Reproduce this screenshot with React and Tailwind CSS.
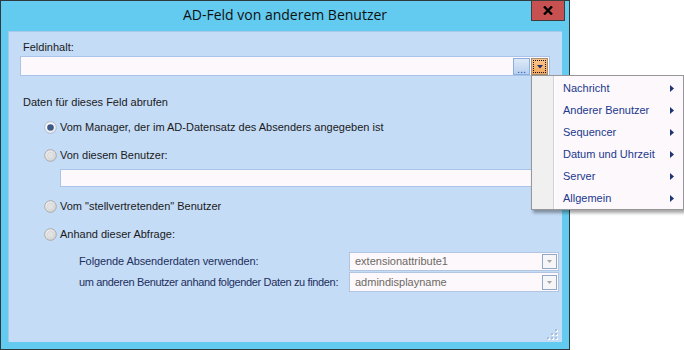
function Radio({ checked }) {
  return (
    <svg width="13" height="13" viewBox="0 0 13 13" className="shrink-0">
      <defs>
        <linearGradient id={checked ? "rg1" : "rg0"} x1="0" y1="0" x2="1" y2="1">
          <stop offset="0" stopColor={checked ? "#ffffff" : "#f4f4f4"} />
          <stop offset="1" stopColor={checked ? "#e6ebf2" : "#cfcfcf"} />
        </linearGradient>
      </defs>
      <circle cx="6.5" cy="6.5" r="5.8" fill={`url(#${checked ? "rg1" : "rg0"})`} stroke={checked ? "#aeb9c9" : "#a9a9a9"} strokeWidth="1" />
      {checked ? (
        <circle cx="6.5" cy="6.5" r="3.3" fill="#3f5a86" />
      ) : (
        <circle cx="6.5" cy="6.5" r="3.3" fill="#e2e2e2" stroke="#d4d4d4" strokeWidth="0.6" />
      )}
    </svg>
  );
}

function RadioRow({ checked, label, mt }) {
  return (
    <div className={`ml-[35px] h-[16px] flex items-center gap-[3px] ${mt}`}>
      <Radio checked={checked} />
      <span className="leading-[13px] text-[#1a1a1a] whitespace-nowrap">{label}</span>
    </div>
  );
}

function Combo({ value, h }) {
  return (
    <div className={`w-[210px] shrink-0 ${h} border border-[#b1c5e0] bg-[#fcf8fc] flex items-center justify-between pl-[5px] pr-[1px]`}>
      <span className="text-[#6e6862] leading-[13px]">{value}</span>
      <div className="w-[15px] h-[15px] border border-[#92a8c4] bg-[#f6f6f8] flex items-center justify-center">
        <svg width="5" height="3" viewBox="0 0 5 3">
          <path d="M0 0H5L2.5 3Z" fill="#a7a7a7" />
        </svg>
      </div>
    </div>
  );
}

const menuItems = ["Nachricht", "Anderer Benutzer", "Sequencer", "Datum und Uhrzeit", "Server", "Allgemein"];

export default function App() {
  return (
    <div className="relative w-[684px] h-[350px] bg-white overflow-hidden font-['Liberation_Sans',Arial,sans-serif] text-[11px]">
      <div className="w-[570px] h-[350px] border border-[#2f3a40] bg-[#63cbef] flex flex-col">
        <div className="h-[30px] shrink-0 grid grid-cols-[1fr_auto_1fr]">
          <div />
          <div className="font-['Open_Sans',sans-serif] text-[14px] leading-[28px] text-[#111]">
            AD-Feld von anderem Benutzer
          </div>
          <div className="flex justify-end items-start pr-[4px]">
            <div className="-mt-[1px] w-[34px] h-[21px] bg-[#c75050] border border-[#3d3d3d] flex items-center justify-center">
              <svg width="10" height="9" viewBox="0 0 10 9">
                <path d="M1 0.5L9 8.5M9 0.5L1 8.5" stroke="#000" strokeWidth="2.4" />
              </svg>
            </div>
          </div>
        </div>
        <div className="mx-[7px] h-[311px] bg-[#c5dcf7] border-t border-l border-[#a9c8ea] flex flex-col">
          <div className="ml-[14px] mt-[9px] leading-[13px] text-[#1a1a1a]">Feldinhalt:</div>
          <div className="ml-[11px] mt-[2px] w-[530px] h-[20px] border border-[#a9c4e8] bg-[#fdf8fc] flex justify-end items-start pt-[1px] pr-[1px] gap-[1px]">
            <div className="w-[17px] h-[17px] border border-[#8aaedd] bg-gradient-to-b from-[#dde9f8] to-[#b8d0f0] flex items-end justify-center">
              <span className="text-[#2850b0] leading-[10px] text-[11px]">...</span>
            </div>
            <div className="w-[17px] h-[17px] border border-[#a38d6c] bg-gradient-to-b from-[#fcc58a] to-[#f4a95e] p-[1px]">
              <div className="w-full h-full border border-dotted border-[#111] flex items-center justify-center">
                <svg width="6" height="4" viewBox="0 0 6 4">
                  <path d="M0 0H6L3 3.5Z" fill="#1b2f6a" />
                </svg>
              </div>
            </div>
          </div>
          <div className="ml-[14px] mt-[20px] leading-[13px] text-[#1a1a1a]">Daten für dieses Feld abrufen</div>
          <RadioRow checked label="Vom Manager, der im AD-Datensatz des Absenders angegeben ist" mt="mt-[10px]" />
          <RadioRow label="Von diesem Benutzer:" mt="mt-[12px]" />
          <div className="ml-[51px] mt-[6px] w-[490px] h-[18px] border border-[#a9c4e8] bg-[#fdf8fc]" />
          <RadioRow label={'Vom "stellvertretenden" Benutzer'} mt="mt-[11px]" />
          <RadioRow label="Anhand dieser Abfrage:" mt="mt-[12px]" />
          <div className="mt-[10px] flex flex-col gap-[1px]">
            <div className="flex items-center">
              <div className="ml-[70px] w-[270px] shrink-0 whitespace-nowrap leading-[13px] tracking-[-0.1px] text-[#1d2f5c]">Folgende Absenderdaten verwenden:</div>
              <Combo value="extensionattribute1" h="h-[19px]" />
            </div>
            <div className="flex items-center">
              <div className="ml-[70px] w-[270px] shrink-0 whitespace-nowrap leading-[13px] tracking-[-0.35px] text-[#1d2f5c]">um anderen Benutzer anhand folgender Daten zu finden:</div>
              <Combo value="admindisplayname" h="h-[20px]" />
            </div>
          </div>
          <div className="mt-auto self-end mr-[3px] mb-[1px]">
            <svg width="12" height="12" viewBox="0 0 12 12">
              <g fill="#ffffff">
                <rect x="9" y="1" width="2" height="2" />
                <rect x="5" y="5" width="2" height="2" />
                <rect x="9" y="5" width="2" height="2" />
                <rect x="1" y="9" width="2" height="2" />
                <rect x="5" y="9" width="2" height="2" />
                <rect x="9" y="9" width="2" height="2" />
              </g>
              <g fill="#a9bdd6">
                <rect x="8" y="0" width="2" height="2" />
                <rect x="4" y="4" width="2" height="2" />
                <rect x="8" y="4" width="2" height="2" />
                <rect x="0" y="8" width="2" height="2" />
                <rect x="4" y="8" width="2" height="2" />
                <rect x="8" y="8" width="2" height="2" />
              </g>
            </svg>
          </div>
        </div>
      </div>

      <div className="absolute left-[531px] top-[75px] w-[153px] h-[135px] border border-[#979797] bg-[#fcf8fc] shadow-[2px_3px_3px_rgba(0,0,0,0.35)] flex">
        <div className="w-[22px] bg-[#f0f0f0] border-r border-[#d2d2d2]" />
        <div className="w-[1px] bg-white" />
        <div className="flex-1 pt-[2px] flex flex-col">
          {menuItems.map((m) => (
            <div key={m} className="h-[22px] flex items-center justify-between pl-[8px] pr-[9px]">
              <span className="text-[#22398c] leading-[13px]">{m}</span>
              <svg width="4" height="7" viewBox="0 0 4 7">
                <path d="M0 0L4 3.5L0 7Z" fill="#1e3574" />
              </svg>
            </div>
          ))}
        </div>
      </div>
    </div>
  );
}
